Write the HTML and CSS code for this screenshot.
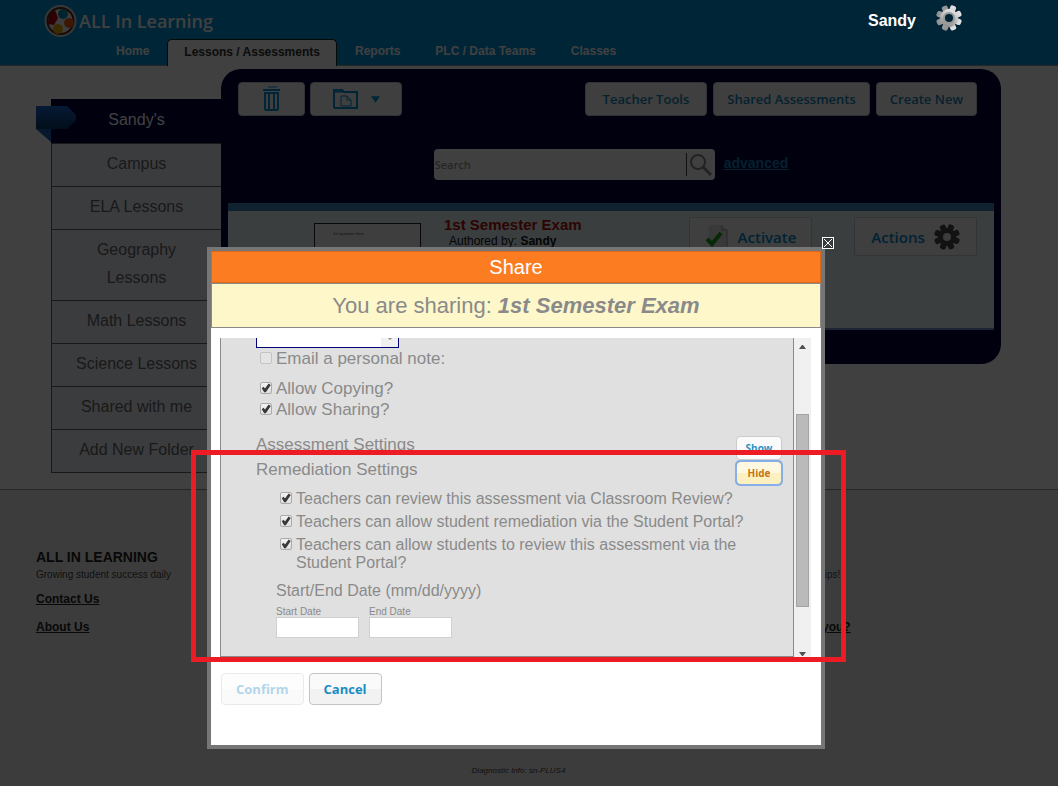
FILE: index.html
```html
<!DOCTYPE html>
<html lang="en">
<head>
    <meta charset="UTF-8">
    <meta name="viewport" content="width=device-width, initial-scale=1.0">
    <title>ALL In Learning - Share</title>
    <link rel="stylesheet" href="styles.css">
</head>
<body>
    <svg class="defs" width="0" height="0" aria-hidden="true">
        <defs>
            <linearGradient id="silver" x1="0" y1="0" x2="0" y2="1">
                <stop offset="0" stop-color="#e4e4e4"/>
                <stop offset="1" stop-color="#8e8e8e"/>
            </linearGradient>
            <linearGradient id="ribbon" x1="0" y1="0" x2="0" y2="1">
                <stop offset="0" stop-color="#1c68d0"/>
                <stop offset="1" stop-color="#083a68"/>
            </linearGradient>
            <g id="gear">
                <rect x="10" y="0" width="6" height="26" rx="2"/>
                <rect x="10" y="0" width="6" height="26" rx="2" transform="rotate(45 13 13)"/>
                <rect x="10" y="0" width="6" height="26" rx="2" transform="rotate(90 13 13)"/>
                <rect x="10" y="0" width="6" height="26" rx="2" transform="rotate(135 13 13)"/>
                <circle cx="13" cy="13" r="9"/>
            </g>
        </defs>
    </svg>

    <header class="header">
        <div class="brand">
            <svg width="33" height="34" viewBox="0 0 33 34">
                <circle cx="16.500" cy="17" r="16" fill="#e0e0e0"/>
                <circle cx="16.500" cy="17" r="14" fill="#5a2a18"/>
                <circle cx="16.500" cy="17" r="12" fill="#f4f4f4"/>
                <path d="M5 12a12 12 0 0 1 6-6l3 8-4 7-6-1z" fill="#b80010"/>
                <circle cx="19" cy="10" r="5" fill="#0090b8"/>
                <circle cx="25" cy="19" r="5" fill="#f06010"/>
                <circle cx="14" cy="25" r="5" fill="#e8b000"/>
            </svg>
            <span class="brand-name">ALL In Learning</span>
        </div>
        <div class="user">
            <span>Sandy</span>
            <svg width="26" height="26" viewBox="0 0 26 26">
                <g fill="url(#silver)" transform="rotate(22 13 13)"><use href="#gear"/></g>
                <circle cx="13" cy="13" r="6" fill="#999"/>
                <circle cx="13" cy="13" r="4" fill="#002537"/>
            </svg>
        </div>
        <nav class="nav">
            <a href="#">Home</a>
            <a href="#" class="active">Lessons / Assessments</a>
            <a href="#">Reports</a>
            <a href="#">PLC / Data Teams</a>
            <a href="#">Classes</a>
        </nav>
    </header>

    <main class="main">
        <nav class="sidebar">
            <svg class="ribbon" width="40" height="36" viewBox="0 0 40 36">
                <path d="M0 23h15v13z" fill="#1a60b8"/>
                <path d="M0 0h31l9 9v5l-9 9H0z" fill="url(#ribbon)"/>
            </svg>
            <a href="#" class="current">Sandy's</a>
            <a href="#">Campus</a>
            <a href="#">ELA Lessons</a>
            <a href="#">Geography<br>Lessons</a>
            <a href="#">Math Lessons</a>
            <a href="#">Science Lessons</a>
            <a href="#">Shared with me</a>
            <a href="#">Add New Folder</a>
        </nav>

        <section class="panel">
            <div class="toolbar">
                <button class="btn btn-trash" aria-label="Delete">
                    <svg width="18" height="26" viewBox="0 0 18 26" fill="none" stroke="#0094dc">
                        <path d="M5 1h9"/>
                        <path d="M0 4h17" stroke-width="2"/>
                        <path d="M2 7v16q0 1 1 1h11q1 0 1-1V7zM6 8v15M11 8v15" stroke-width="2"/>
                    </svg>
                </button>
                <button class="btn btn-folder" aria-label="Move to folder">
                    <svg width="26" height="22" viewBox="0 0 26 22" fill="none" stroke="#0094dc">
                        <path d="M1 19V2h8l2 2h13v16H2z" stroke-width="2"/>
                        <path d="M1 3h9" stroke-width="3"/>
                        <path d="M8 8h6l4 4v6H8zM14 8v4h4"/>
                    </svg>
                    <svg width="9" height="7" viewBox="0 0 10 7"><path d="M0 0h10L5 7z" fill="#0094dc"/></svg>
                </button>
                <div class="toolbar-right">
                    <button class="btn btn-wide">Teacher Tools</button>
                    <button class="btn">Shared Assessments</button>
                    <button class="btn">Create New</button>
                </div>
            </div>

            <div class="search">
                <div class="search-box">
                    <input type="text" placeholder="Search" aria-label="Search">
                    <svg width="24" height="24" viewBox="0 0 24 24" fill="none" stroke="#888">
                        <circle cx="9" cy="9" r="7" stroke-width="2"/>
                        <path d="M14 14l8 8" stroke-width="3"/>
                    </svg>
                </div>
                <a href="#">advanced</a>
            </div>

            <article class="lesson">
                <div class="thumb"><span>1st question here</span></div>
                <div class="lesson-info">
                    <h2>1st Semester Exam</h2>
                    <p>Authored by: <b>Sandy</b></p>
                </div>
                <button class="action">
                    <svg width="24" height="26" viewBox="0 0 24 26">
                        <path d="M4 1h13l5 5v19H4z" fill="#e4e4e4"/>
                        <path d="M17 1v5h5v19" fill="none" stroke="#999"/>
                        <path d="M2 15l5 5 9-11" fill="none" stroke="#18a818" stroke-width="4"/>
                    </svg>
                    Activate
                </button>
                <button class="action">
                    Actions
                    <svg width="26" height="26" viewBox="0 0 26 26">
                        <g fill="#484848" transform="rotate(22 13 13)"><use href="#gear"/></g>
                        <circle cx="13" cy="13" r="4" fill="#eee"/>
                    </svg>
                </button>
            </article>
        </section>
    </main>

    <footer class="footer">
        <div class="footer-cols">
            <div>
                <h3>ALL IN LEARNING</h3>
                <p>Growing student success daily</p>
                <a href="#">Contact Us</a>
                <a href="#">About Us</a>
            </div>
            <div class="footer-tips">
                <p>tips!</p>
                <a href="#">you?</a>
            </div>
        </div>
        <p class="diagnostic">Diagnostic Info: sn-PLUS4</p>
    </footer>

    <div class="shade"></div>

    <div class="dialog-layer">
        <div class="dialog" role="dialog" aria-labelledby="dialog-title">
            <button class="close" aria-label="Close">
                <svg width="12" height="12" viewBox="0 0 12 12" fill="none" stroke="#fff">
                    <path d="M1.500 1.500h9v9h-9z" stroke="#333"/>
                    <rect x=".5" y=".5" width="11" height="11"/>
                    <path d="M2 2l8 8M10 2l-8 8"/>
                </svg>
            </button>
            <h1 id="dialog-title">Share</h1>
            <p class="subject">You are sharing: <strong>1st Semester Exam</strong></p>

            <form class="dialog-body">
                <div class="scroller">
                    <div class="settings">
                        <div class="pick">
                            <select aria-label="Share with"><option></option></select>
                        </div>
                        <label class="check"><input type="checkbox" disabled>Email a personal note:</label>
                        <div class="allow">
                            <label class="check"><input type="checkbox" checked>Allow Copying?</label>
                            <label class="check"><input type="checkbox" checked>Allow Sharing?</label>
                        </div>

                        <div class="section">
                            <span>Assessment Settings</span>
                            <button type="button" class="toggle">Show</button>
                        </div>
                        <div class="section">
                            <span>Remediation Settings</span>
                            <button type="button" class="toggle open">Hide</button>
                        </div>

                        <div class="remediation">
                            <label class="check"><input type="checkbox" checked>Teachers can review this assessment via Classroom Review?</label>
                            <label class="check"><input type="checkbox" checked>Teachers can allow student remediation via the Student Portal?</label>
                            <label class="check"><input type="checkbox" checked>Teachers can allow students to review this assessment via the Student Portal?</label>
                        </div>

                        <div class="dates">
                            <p>Start/End Date (mm/dd/yyyy)</p>
                            <div class="date-row">
                                <label>Start Date<input type="text"></label>
                                <label>End Date<input type="text"></label>
                            </div>
                        </div>
                    </div>
                    <div class="scrollbar">
                        <svg width="7" height="4" viewBox="0 0 7 4"><path d="M0 4h7L4 0H3z" fill="#505050"/></svg>
                        <div class="thumb-bar"></div>
                        <svg width="7" height="4" viewBox="0 0 7 4"><path d="M0 0h7L4 4H3z" fill="#505050"/></svg>
                    </div>
                </div>

                <div class="dialog-buttons">
                    <button type="button" class="dialog-btn" disabled>Confirm</button>
                    <button type="button" class="dialog-btn">Cancel</button>
                </div>
            </form>
            <div class="highlight"></div>
        </div>
    </div>
</body>
</html>
```

FILE: styles.css
```css
* {
    box-sizing: border-box;
}
body {
    margin: 0;
    min-height: 100vh;
    position: relative;
    display: flex;
    flex-direction: column;
    background: #fff;
    font-family: Arial, "Liberation Sans", sans-serif;
    color: #444;
}
h1, h2, h3, p {
    margin: 0;
}
button, input, select {
    font-family: inherit;
    margin: 0;
}
.defs {
    position: absolute;
}

/* header */
.header {
    display: grid;
    grid-template-columns: 1fr auto;
    grid-template-rows: 39px 27px;
    padding: 0 96px 0 44px;
    background: #0094dc;
    border-bottom: 1px solid #999;
    height: 66px;
}
.brand {
    display: flex;
    align-items: center;
    gap: 2px;
    padding-top: 3px;
}
.brand-name {
    font-family: "Open Sans", sans-serif;
    font-size: 18px;
    font-weight: 600;
    color: #fff;
}
.user {
    position: relative;
    z-index: 20;
    display: flex;
    align-items: center;
    gap: 20px;
    height: 35px;
    font-size: 16px;
    font-weight: bold;
    color: #fff;
}
.user span {
    padding-top: 6px;
}
.nav {
    grid-column: 1 / -1;
    display: flex;
    gap: 1px;
    padding-left: 55px;
}
.nav a {
    height: 27px;
    padding: 0 16px;
    border: 1px solid transparent;
    border-bottom: 0;
    border-radius: 5px 5px 0 0;
    font-size: 12px;
    font-weight: bold;
    line-height: 22px;
    color: #fff;
    text-decoration: none;
}
.nav a.active {
    background: #fff;
    border-color: #222;
    color: #333;
    line-height: 24px;
}

/* lessons area */
.main {
    display: flex;
    align-items: flex-start;
    padding: 3px 57px 16px 51px;
}
.sidebar {
    position: relative;
    flex: 0 0 170px;
    margin-top: 30px;
    border-left: 1px solid #666;
    background: #ecf0f8;
}
.sidebar a {
    display: block;
    padding: 6px 0 8px;
    border-bottom: 1px solid #666;
    font-size: 16px;
    line-height: 28px;
    text-align: center;
    color: #666;
    text-decoration: none;
}
.sidebar a.current {
    margin-left: -1px;
    padding: 7px 0 9px 1px;
    background: #00003c;
    color: #fff;
}
.ribbon {
    position: absolute;
    left: -16px;
    top: 7px;
}
.panel {
    flex: 1;
    padding: 13px 7px 34px;
    background: #00003c;
    border-radius: 20px 20px 20px 0;
}
.toolbar {
    display: flex;
    gap: 5px;
    padding: 0 17px 0 10px;
}
.toolbar-right {
    display: flex;
    gap: 6px;
    margin-left: auto;
}
.btn, .action {
    display: flex;
    align-items: center;
    justify-content: center;
    font-family: "Trebuchet MS", "Open Sans", sans-serif;
    font-weight: 600;
    color: #1484b8;
    background: #fcfcfc;
}
.btn {
    height: 34px;
    padding: 0 13px;
    border: 1px solid #ccc;
    border-radius: 4px;
    font-size: 13px;
}
.btn-wide {
    padding: 0 17px;
}
.btn-trash {
    width: 67px;
}
.btn-folder {
    width: 92px;
    gap: 12px;
}
.search {
    display: flex;
    align-items: center;
    justify-content: center;
    gap: 9px;
    padding: 33px 0 23px;
}
.search-box {
    display: flex;
    align-items: center;
    width: 281px;
    height: 31px;
    padding: 0 2px 0 0;
    background: #fff;
    border-radius: 4px;
}
.search-box input {
    flex: 1;
    min-width: 0;
    height: 23px;
    margin-right: 2px;
    padding: 0 1px;
    border: 0;
    border-right: 1px solid #444;
    background: transparent;
    font-family: "Trebuchet MS", "Open Sans", sans-serif;
    font-size: 11px;
    font-weight: 600;
}
.search-box input::placeholder {
    color: #999;
}
.search a {
    font-size: 14px;
    font-weight: bold;
    line-height: 27px;
    padding-bottom: 2px;
    color: #1480b8;
}
.lesson {
    display: flex;
    align-items: flex-start;
    height: 127px;
    padding: 6px 17px 0 86px;
    background: #e8f8f8;
    border-top: 8px solid #4084c0;
    border-bottom: 2px solid #7890d0;
}
.thumb {
    width: 107px;
    height: 90px;
    margin: 6px 23px 0 0;
    padding: 8px 0 0 18px;
    border: 1px solid #222;
    background: #f8f8f8;
    font-size: 4px;
    line-height: 4px;
}
.lesson-info {
    flex: 1;
}
.lesson-info h2 {
    font-size: 15px;
    line-height: 16px;
    color: #b01008;
}
.lesson-info p {
    padding-left: 5px;
    font-size: 12px;
    line-height: 16px;
    color: #111;
}
.action {
    gap: 9px;
    width: 123px;
    height: 39px;
    padding: 0;
    border: 1px solid #c8d0e0;
    border-radius: 2px;
    font-size: 15px;
    color: #0088d0;
}
.action + .action {
    margin-left: 42px;
}

/* footer */
.footer {
    flex: 1;
    padding: 57px 57px 0 36px;
    background: #f0f0f0;
    border-top: 1px solid #999;
}
.footer-cols {
    display: flex;
    justify-content: space-between;
}
.footer h3 {
    font-size: 14px;
    line-height: 20px;
    color: #222;
}
.footer p {
    font-size: 10px;
    line-height: 16px;
}
.footer a {
    display: block;
    margin-top: 10px;
    font-size: 12px;
    font-weight: bold;
    line-height: 18px;
    color: #222;
}
.footer p + a {
    margin-top: 7px;
}
.footer-tips {
    flex: 0 0 179px;
    padding-top: 20px;
}
.footer .footer-tips a {
    margin-top: 35px;
}
.footer .diagnostic {
    margin-top: 130px;
    font-size: 8px;
    line-height: 10px;
    font-style: italic;
    text-align: center;
}

/* share dialog */
.shade {
    position: absolute;
    inset: 0;
    z-index: 10;
    background: rgba(0, 0, 0, 0.75);
}
.dialog-layer {
    position: absolute;
    inset: 0;
    z-index: 30;
    display: flex;
    justify-content: center;
    align-items: flex-start;
    padding: 247px 62px 0 36px;
    pointer-events: none;
}
.dialog {
    position: relative;
    width: 618px;
    border: 4px solid #767676;
    background: #fff;
    color: #8a8a8a;
    pointer-events: auto;
}
.close {
    position: absolute;
    top: -14px;
    right: -13px;
    width: 12px;
    height: 12px;
    padding: 0;
    border: 0;
    background: none;
}
.close svg {
    display: block;
}
.dialog h1 {
    border: 1px solid #dd6a1c;
    background: #fc7c22;
    font-size: 20px;
    font-weight: normal;
    line-height: 30px;
    text-align: center;
    color: #fff;
}
.subject {
    border: 1px solid #8a8a8a;
    background: #fdf7ca;
    font-size: 22px;
    line-height: 43px;
    text-align: center;
}
.subject strong {
    font-style: italic;
}
.dialog-body {
    padding: 10px 10px 40px 9px;
}
.scroller {
    display: flex;
    height: 320px;
    overflow: hidden;
}
.settings {
    flex: 1;
    height: 319px;
    padding: 0 11px 0 35px;
    border: 1px solid #8a8a8a;
    border-top: 0;
    background: #e0e0e0;
    font-size: 17px;
    line-height: 18px;
}
.pick {
    position: relative;
    width: 143px;
    margin-top: -12px;
}
.pick select {
    display: block;
    appearance: none;
    width: 100%;
    height: 22px;
    border: 1px solid #000078;
    border-radius: 0;
    background: linear-gradient(to left, #f0f0f0 17px, #fff 17px);
}
.pick::after {
    content: "";
    position: absolute;
    right: 6px;
    bottom: 8px;
    border: 3px solid transparent;
    border-top-color: #888;
    border-bottom: 0;
}
.check {
    display: flex;
    align-items: flex-start;
    gap: 4px;
    padding-left: 4px;
}
.check input {
    appearance: none;
    flex: 0 0 12px;
    height: 12px;
    margin-top: 2px;
    border: 1px solid #aaa;
    border-radius: 2px;
    background: linear-gradient(#f2f2f2, #dedede);
}
.check input:disabled {
    border-color: #c4c4c4;
    background: #e4e4e4;
}
.check input:checked::before {
    content: "";
    display: block;
    width: 10px;
    height: 10px;
    background: #383838;
    clip-path: polygon(8% 52%, 25% 38%, 40% 54%, 76% 6%, 98% 20%, 48% 92%, 32% 92%);
}
.settings > .check {
    margin-top: 2px;
}
.allow {
    display: grid;
    gap: 3px;
    margin: 12px 0 17px;
}
.section {
    display: flex;
    align-items: flex-start;
    justify-content: space-between;
    margin-bottom: 1px;
}
.toggle {
    width: 46px;
    height: 24px;
    padding: 0;
    border: 1px solid #ccc;
    border-radius: 4px;
    background: #fafafa;
    font-family: "Trebuchet MS", "Open Sans", sans-serif;
    font-size: 10px;
    font-weight: bold;
    color: #2a94c4;
}
.toggle.open {
    border-color: #a8a860;
    outline: 2px solid #86aee8;
    outline-offset: -1px;
    background: linear-gradient(#fff8e0 50%, #fdf0c0 50%);
    color: #c87410;
}
.remediation {
    display: grid;
    gap: 5px;
    margin: 5px 20px 10px;
    font-size: 16px;
}
.dates {
    padding-left: 20px;
    font-size: 16px;
}
.date-row {
    display: flex;
    gap: 10px;
    margin-top: 6px;
}
.date-row label {
    width: 83px;
    font-size: 10px;
    line-height: 11px;
}
.date-row input {
    display: block;
    width: 100%;
    height: 21px;
    border: 1px solid #d0d0d0;
    background: #fff;
}
.scrollbar {
    display: flex;
    flex-direction: column;
    align-items: center;
    width: 17px;
    padding: 7px 0 2px;
    background: #f0f0f0;
}
.thumb-bar {
    width: 13px;
    height: 193px;
    margin: 65px 0 auto;
    border: 1px solid #a4a4a4;
    background: #bababa;
}
.dialog-buttons {
    display: flex;
    gap: 5px;
    padding: 15px 1px 0;
}
.dialog-btn {
    height: 32px;
    padding: 0 14px;
    border: 1px solid #c4c4c4;
    border-radius: 4px;
    background: linear-gradient(#fafafa 50%, #f2f2f2 50%);
    font-family: "Trebuchet MS", "Open Sans", sans-serif;
    font-size: 13px;
    font-weight: bold;
    color: #1c8cc4;
}
.dialog-btn:disabled {
    opacity: 0.35;
}
.highlight {
    position: absolute;
    top: 199px;
    left: -20px;
    right: -25px;
    height: 212px;
    border: 5px solid #ed1c24;
    pointer-events: none;
}
```
